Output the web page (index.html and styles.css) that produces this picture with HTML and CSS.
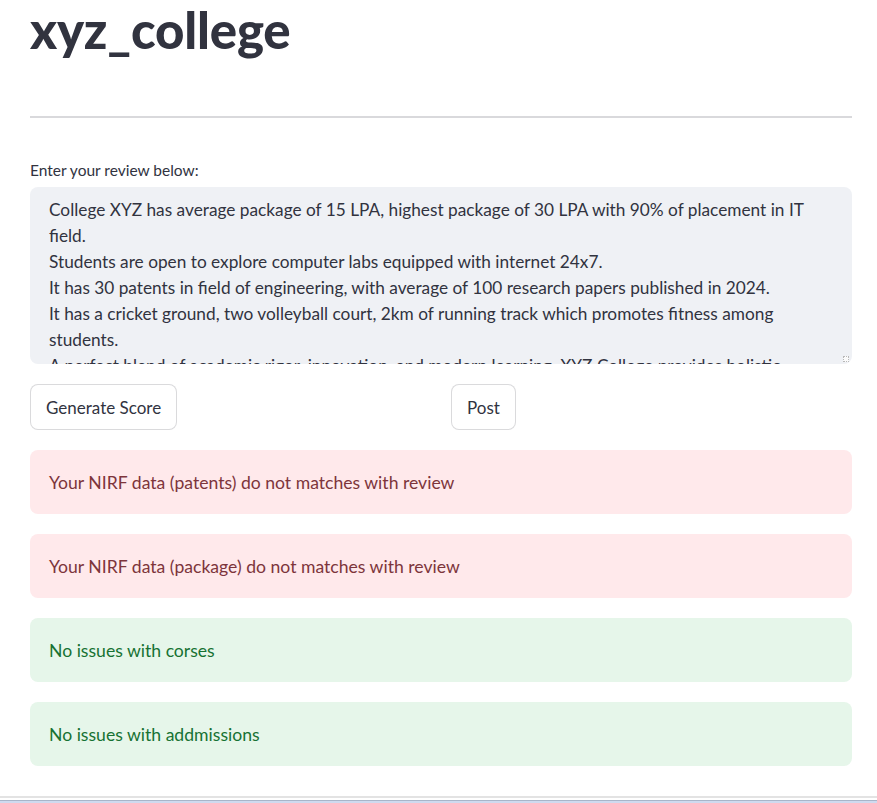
FILE: index.html
```html
<!DOCTYPE html>
<html lang="en">
<head>
<meta charset="utf-8">
<title>xyz_college</title>
<link rel="stylesheet" href="styles.css">
</head>
<body>
<div class="app">
  <main class="main">
    <h1 class="title">xyz_college</h1>
    <div class="divider"></div>
    <label class="field-label">Enter your review below:</label>
    <div class="review-box">
      <div class="review-text">
        <span class="line">College XYZ has average package of 15 LPA, highest package of 30 LPA with 90% of placement in IT</span>
        <span class="line">field.</span>
        <span class="line">Students are open to explore computer labs equipped with internet 24x7.</span>
        <span class="line">It has 30 patents in field of engineering, with average of 100 research papers published in 2024.</span>
        <span class="line">It has a cricket ground, two volleyball court, 2km of running track which promotes fitness among</span>
        <span class="line">students.</span>
        <span class="line">A perfect blend of academic rigor, innovation, and modern learning, XYZ College provides holistic</span>
      </div>
      <span class="resize-handle"></span>
    </div>
    <div class="button-row">
      <div class="col"><button class="btn">Generate Score</button></div>
      <div class="col"><button class="btn">Post</button></div>
    </div>
    <div class="alerts">
      <div class="alert alert-error">Your NIRF data (patents) do not matches with review</div>
      <div class="alert alert-error">Your NIRF data (package) do not matches with review</div>
      <div class="alert alert-success">No issues with corses</div>
      <div class="alert alert-success">No issues with addmissions</div>
    </div>
  </main>
  <footer class="window-edge"></footer>
</div>
</body>
</html>
```
FILE: styles.css
```css
* { box-sizing: border-box; }
html, body { margin: 0; padding: 0; background: #ffffff; }
body {
  font-family: "Lato", "Open Sans", sans-serif;
  color: #31333f;
  overflow: hidden;
}
.app {
  min-height: 803px;
  height: 100vh;
  display: flex;
  flex-direction: column;
}
.main {
  padding: 0 25px 0 30px;
  flex: 1;
}
.title {
  margin: 0;
  font-size: 51px;
  line-height: 60px;
  font-weight: 900;
  letter-spacing: -0.2px;
  color: #31333f;
}
.divider {
  height: 2px;
  background: #d9d9dc;
  margin-top: 56px;
}
.field-label {
  display: block;
  margin-top: 42px;
  font-size: 15.5px;
  line-height: 20px;
  color: #31333f;
}
.review-box {
  position: relative;
  margin-top: 7px;
  height: 177px;
  background: #eff1f5;
  border-radius: 8px;
  overflow: hidden;
  padding: 10px 19px 0 19px;
}
.review-text {
  font-size: 17.25px;
  line-height: 26px;
  white-space: nowrap;
}
.line { display: block; }
.resize-handle {
  position: absolute;
  right: 3px;
  bottom: 2px;
  width: 6px;
  height: 6px;
  border: 1px dotted #b8b8b8;
  background: #fafafa;
}
.button-row {
  margin-top: 20px;
  display: grid;
  grid-template-columns: 1fr 1fr;
  gap: 20px;
}
.btn {
  height: 46px;
  padding: 0 15px;
  background: #ffffff;
  border: 1px solid rgba(49, 51, 63, 0.18);
  border-radius: 8px;
  font-family: inherit;
  font-size: 17px;
  color: #31333f;
}
.alerts {
  margin-top: 20px;
  display: flex;
  flex-direction: column;
  gap: 20px;
}
.alert {
  height: 64px;
  padding: 0 19px;
  display: flex;
  align-items: center;
  border-radius: 8px;
  font-size: 17.6px;
}
.alert-error {
  background: #ffe9eb;
  color: #7d353b;
}
.alert-success {
  background: #e6f6ea;
  color: #177233;
}
.window-edge {
  height: 7px;
  border-top: 2px solid #e3e3e3;
  background: linear-gradient(#ffffff 0, #ffffff 2px, #a9b5c9 2px, #a9b5c9 3px, #cfdaef 3px);
}
```
